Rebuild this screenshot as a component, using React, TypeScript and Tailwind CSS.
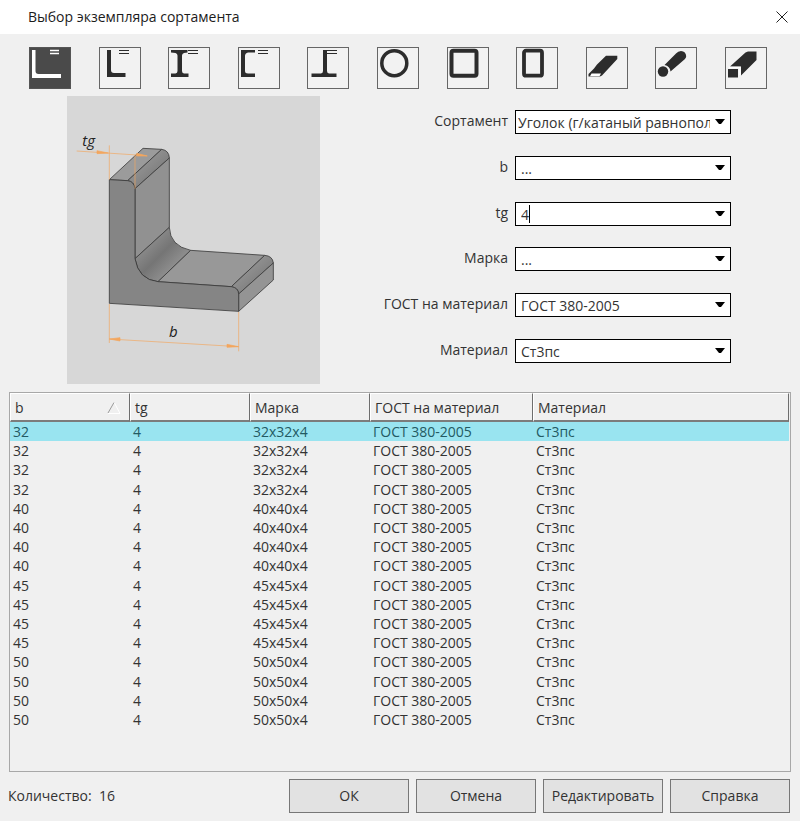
import { useState, type ReactNode } from "react";

const lines = (
  <path d="M20 3.5h10M20 6.5h10" stroke="currentColor" strokeWidth="1" fill="none" />
);

const profiles: { name: string; icon: ReactNode }[] = [
  {
    name: "Уголок равнополочный",
    icon: (
      <>
        <path d="M3 3h3.500v21q0 3 3 3H32v4H3z" fill="currentColor" />
        <path d="M21 3.500h9M21 6.500h9" stroke="currentColor" strokeWidth="1.4" />
      </>
    ),
  },
  {
    name: "Уголок неравнополочный",
    icon: (
      <>
        <path d="M8 3h4v20q0 3 3 3h11.500v4H8z" fill="currentColor" />
        {lines}
      </>
    ),
  },
  {
    name: "Двутавр",
    icon: (
      <>
        <path
          d="M3 3h16.500v2.500l-3.500.5q-2 .5-2 2.500v15.500q0 2 2 2.500h4.500V30H3v-3.500h4.500q2-.5 2-2.500V8.500q0-2-2-2.500L3 5.500z"
          fill="currentColor"
        />
        {lines}
      </>
    ),
  },
  {
    name: "Швеллер",
    icon: (
      <>
        <path d="M3 3h14v2.500h-7q-3 .5-3 3.500v15q0 2.500 3 2.500h7V30H3z" fill="currentColor" />
        {lines}
      </>
    ),
  },
  {
    name: "Тавр",
    icon: (
      <>
        <path d="M16 3h4v21q0 2 2 2.500h7.500V30h-25v-3.500H14q2-.5 2-2.500z" fill="currentColor" />
        {lines}
      </>
    ),
  },
  {
    name: "Труба круглая",
    icon: <circle cx="17.300" cy="16.200" r="12.500" fill="none" stroke="currentColor" strokeWidth="3.500" />,
  },
  {
    name: "Труба квадратная",
    icon: (
      <rect x="4.500" y="3.700" width="25" height="25" rx="2" fill="none" stroke="currentColor" strokeWidth="4" />
    ),
  },
  {
    name: "Труба прямоугольная",
    icon: (
      <rect x="8" y="3.700" width="18" height="25" rx="2" fill="none" stroke="currentColor" strokeWidth="3.800" />
    ),
  },
  {
    name: "Полоса",
    icon: (
      <>
        <path d="M2.500 29.500V27L8 21.500l3-4L20 8.700h11.300V12L16 28.500l-2 1z" fill="currentColor" />
        <path d="M5.500 26.600h9.500l-1.500 2.600h-9.500z" fill="#fff" />
      </>
    ),
  },
  {
    name: "Круг",
    icon: (
      <>
        <path
          d="M9.500 18L21 6.500q2-2.500 5-2.500 5 .5 5.200 5.300 0 1.500-1.500 3L15.500 24.500q-.5-5.500-6-6.500z"
          fill="currentColor"
        />
        <circle cx="8" cy="24.500" r="5.200" fill="currentColor" />
      </>
    ),
  },
  {
    name: "Квадрат",
    icon: (
      <>
        <path d="M5 19.500L20.500 5.500l2.500-1h8.500V13L16 28.500V19.500z" fill="currentColor" />
        <path d="M3 22h10v8.500H3z" fill="currentColor" />
        <path d="M4 20.500h11V28" fill="none" stroke="#fff" strokeWidth="1.300" />
      </>
    ),
  },
];

const marks = ["32", "40", "45", "50"];
const rows = marks.flatMap((b) =>
  Array.from({ length: 4 }, () => [b, "4", `${b}x${b}x4`, "ГОСТ 380-2005", "Ст3пс"]),
);

const columns = ["b", "tg", "Марка", "ГОСТ на материал", "Материал"];

function Arrow() {
  return (
    <svg
      className="pointer-events-none absolute top-[9px] right-[6px] h-[5px] w-[10px]"
      viewBox="0 0 10 5"
      aria-hidden="true"
    >
      <path d="M0 0h10L6 5H4z" fill="#000" />
    </svg>
  );
}

function Field({ id, label, children }: { id: string; label: string; children: ReactNode }) {
  return (
    <>
      <label htmlFor={id} className="text-right leading-[22px] whitespace-nowrap">
        {label}
      </label>
      <div className="relative h-6">
        {children}
        <Arrow />
      </div>
    </>
  );
}

const box =
  "block h-6 w-full appearance-none overflow-hidden rounded-none border border-black bg-white pt-[2px] pr-5 leading-5 text-[#333] outline-none";

function Combo({ id, label, value }: { id: string; label: string; value: string }) {
  return (
    <Field id={id} label={label}>
      <select id={id} className={`${box} pl-[5px]`} defaultValue={value}>
        <option>{value}</option>
      </select>
    </Field>
  );
}

function Preview() {
  return (
    <svg
      className="h-[288px] w-[253px] shrink-0 bg-[#d7d7d7]"
      viewBox="21 18 759 864"
      role="img"
      aria-label="Эскиз уголка"
    >
      <defs>
        <linearGradient id="fillet" x1="260" y1="460" x2="345" y2="545" gradientUnits="userSpaceOnUse">
          <stop offset="0" stopColor="#8c8c8c" />
          <stop offset="0.45" stopColor="#757575" />
          <stop offset="1" stopColor="#949494" />
        </linearGradient>
        <linearGradient id="round" x1="0" y1="0" x2="1" y2="1">
          <stop offset="0.3" stopColor="#949494" />
          <stop offset="0.7" stopColor="#7d7d7d" />
        </linearGradient>
      </defs>
      <g stroke="#3c3c3c" strokeWidth="2.500" strokeLinejoin="round">
        <path d="M148 269L249 175L305 178L203 272z" fill="#9b9b9b" />
        <path d="M203 272L305 178Q327 181 328 204L225 296Q222 274 203 272z" fill="url(#round)" />
        <path d="M225 296L328 204V412L225 506z" fill="#919191" />
        <path d="M225 506L328 412Q330 468 392 481L294 575Q235 569 225 506z" fill="url(#fillet)" />
        <path d="M294 575L392 481L614 496L514 590z" fill="#989898" />
        <path d="M514 590L614 496Q638 498 640 519L536 612Q535 593 514 590z" fill="url(#round)" />
        <path d="M536 612L640 519V570L536 664z" fill="#949494" />
        <path
          d="M148 269L203 272Q222 274 225 296V506Q235 569 294 575L514 590Q535 593 536 612V664L148 640z"
          fill="#858585"
        />
      </g>
      <g stroke="#f3a65e" strokeWidth="2" fill="none">
        <path d="M148 166V269M148 642V759M536 666V784M225 196V296M50 183L260 197M148 747L536 770" />
        <path
          d="M111 182v9l34-2zM262 198l-32-8v8zM148 747l32-4v10zM536 770l-35-7v9z"
          fill="#f3a65e"
        />
      </g>
      <g className="fill-[#222] font-['Liberation_Sans_Narrow','Open_Sans',sans-serif] text-[45px] italic">
        <text x="67" y="167">tg</text>
        <text x="327" y="740">b</text>
      </g>
    </svg>
  );
}

export default function App() {
  const [profile, setProfile] = useState(0);
  const [selected, setSelected] = useState(0);
  const [thickness, setThickness] = useState("4");

  return (
    <main className="flex min-h-screen flex-col bg-[#f0f0f0] font-['Open_Sans','Noto_Sans',sans-serif] text-sm text-[#333]">
      <header className="flex h-[34px] items-center justify-between bg-white pr-3 pl-7">
        <h1 className="text-sm text-[#1c1c1c]">Выбор экземпляра сортамента</h1>
        <button type="button" aria-label="Закрыть" className="flex h-8 items-center">
          <svg className="h-3 w-3" viewBox="0 0 12 12" aria-hidden="true">
            <path d="M.5.5l11 11M11.500.5l-11 11" stroke="#222" strokeWidth="1" />
          </svg>
        </button>
      </header>

      <div className="flex justify-between pt-[13px] pr-[33px] pl-[29px]" role="group" aria-label="Профиль">
        {profiles.map((p, i) => (
          <button
            key={p.name}
            type="button"
            aria-label={p.name}
            aria-pressed={i === profile}
            onClick={() => setProfile(i)}
            className={
              i === profile
                ? "h-[42px] w-[42px] bg-[#4a4a4a] text-white outline outline-1 -outline-offset-1 outline-[#555]"
                : "h-[42px] w-[42px] bg-[#f2f2f2] text-[#2c2c2c] outline outline-1 -outline-offset-1 outline-[#666]"
            }
          >
            <svg className="h-[42px] w-[42px]" viewBox="0 0 42 42" aria-hidden="true">
              {p.icon}
            </svg>
          </button>
        ))}
      </div>

      <section className="flex justify-between pt-[7px] pr-[69px] pl-[67px]">
        <Preview />
        <div className="grid grid-cols-[auto_216px] content-between gap-x-[7px] pt-[14px] pb-[21px]">
          <Field id="kind" label="Сортамент">
            <select id="kind" className={`${box} pl-[2px]`}>
              <option>Уголок (г/катаный равнополочный)</option>
            </select>
          </Field>
          <Combo id="b" label="b" value="..." />
          <Field id="tg" label="tg">
            <input
              id="tg"
              type="text"
              className={`${box} pl-[5px] caret-transparent`}
              value={thickness}
              onChange={(e) => setThickness(e.target.value)}
            />
            <span className="pointer-events-none absolute top-[3px] left-[14px] h-[18px] w-px bg-black" />
          </Field>
          <Combo id="mark" label="Марка" value="..." />
          <Combo id="gost" label="ГОСТ на материал" value="ГОСТ 380-2005" />
          <Combo id="material" label="Материал" value="Ст3пс" />
        </div>
      </section>

      <div className="mx-[9px] mt-2 flex-1 border border-[#a8a8a8] pr-px">
        <table className="h-[336px] w-full table-fixed border-separate border-spacing-0">
          <colgroup>
            <col className="w-[120px]" />
            <col className="w-[120px]" />
            <col className="w-[120px]" />
            <col className="w-[163px]" />
            <col />
          </colgroup>
          <thead>
            <tr className="h-[28px]">
              {columns.map((c, i) => (
                <th
                  key={c}
                  scope="col"
                  aria-sort={i === 0 ? "ascending" : undefined}
                  className="h-[28px] border-t border-r border-b-2 border-l border-[#6e6e6e] border-t-white border-b-[#7c7c7c] border-l-white p-0 pl-1 text-left leading-[25px] font-normal"
                >
                  <div className="flex items-center justify-between pt-px pr-2">
                    {c}
                    {i === 0 && (
                      <svg className="h-3 w-[14px]" viewBox="0 0 14 12" aria-hidden="true">
                        <path d="M7 0l6 11.500H1" stroke="#fff" fill="none" />
                        <path d="M1 11L7 .5" stroke="#999" fill="none" />
                      </svg>
                    )}
                  </div>
                </th>
              ))}
            </tr>
          </thead>
          <tbody>
            {rows.map((r, i) => (
              <tr
                key={i}
                aria-selected={i === selected}
                onClick={() => setSelected(i)}
                className={i === selected ? "bg-[#99e4f0] text-[#235a63]" : ""}
              >
                {r.map((cell, j) => (
                  <td key={j} className="p-0 pl-[3px] leading-[19px]">
                    {cell}
                  </td>
                ))}
              </tr>
            ))}
          </tbody>
        </table>
      </div>

      <footer className="flex items-center justify-between pt-[7px] pr-[10px] pb-2 pl-2">
        <p className="whitespace-pre">Количество:  16</p>
        <div className="flex gap-[7px]">
          {["ОК", "Отмена", "Редактировать", "Справка"].map((t) => (
            <button
              key={t}
              type="button"
              className="h-[34px] w-[120px] border border-[#777] bg-[#e2e2e2] text-center whitespace-nowrap"
            >
              {t}
            </button>
          ))}
        </div>
      </footer>
    </main>
  );
}
